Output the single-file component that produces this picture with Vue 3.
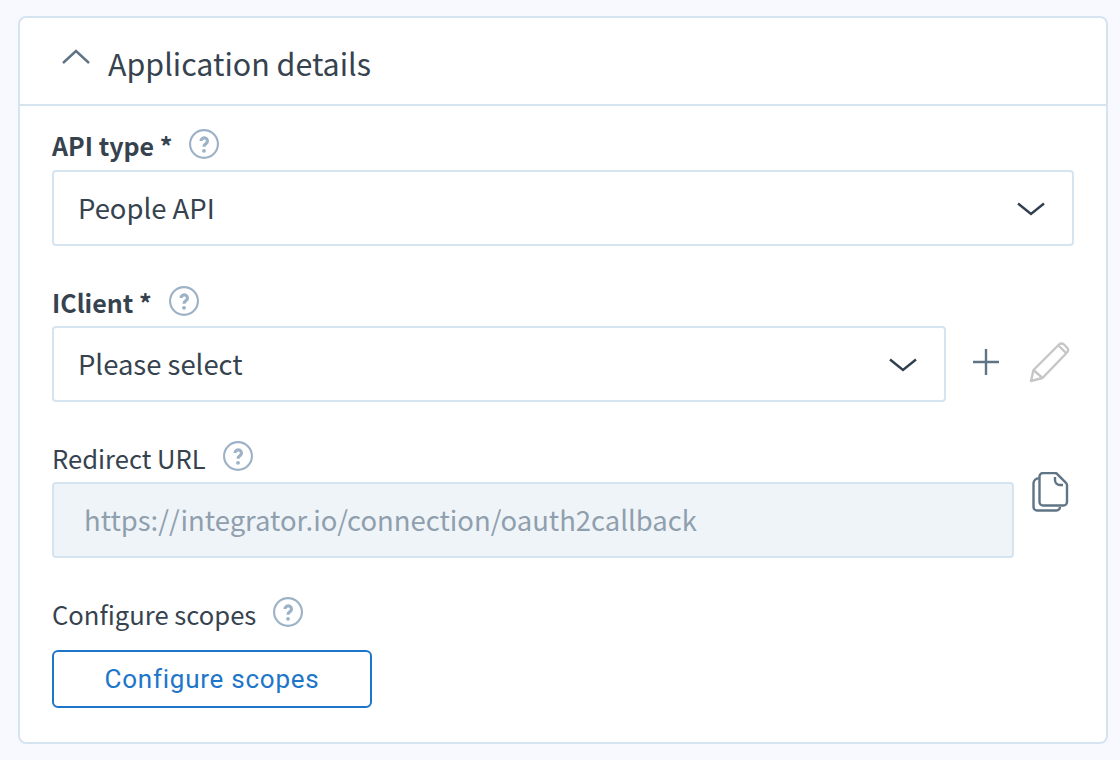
<script setup>
const qPath = 'M11.2 11.2a3 3 0 1 1 4.7 2.5c-1.2.8-1.9 1.4-1.9 2.8';
</script>

<template>
  <div class="page">
    <section class="card">
      <header class="head">
        <svg class="toggle" width="32" height="20" viewBox="0 0 32 20" fill="none">
          <path d="M3 16 16 4l13 12" stroke="#5f7485" stroke-width="2.4" />
        </svg>
        <h2 class="title">Application details</h2>
      </header>
      <div class="body">
        <div class="label-row first">
          <span class="label strong">API type *</span>
          <svg class="help" width="30" height="30" viewBox="0 0 28 28" fill="none">
            <circle cx="14" cy="14" r="13" stroke="#9db2c6" stroke-width="2" />
            <path :d="qPath" stroke="#9db2c6" stroke-width="3" />
            <circle cx="14" cy="20.4" r="1.8" fill="#9db2c6" />
          </svg>
        </div>
        <div class="select full">
          <span class="value">People API</span>
          <svg class="chev" width="30" height="16" viewBox="0 0 30 16" fill="none">
            <path d="M2 2.500 15 13 28 2.500" stroke="#2f3f4e" stroke-width="2.400" />
          </svg>
        </div>

        <div class="label-row second">
          <span class="label strong">IClient *</span>
          <svg class="help" width="30" height="30" viewBox="0 0 28 28" fill="none">
            <circle cx="14" cy="14" r="13" stroke="#9db2c6" stroke-width="2" />
            <path :d="qPath" stroke="#9db2c6" stroke-width="3" />
            <circle cx="14" cy="20.4" r="1.8" fill="#9db2c6" />
          </svg>
        </div>
        <div class="field-row">
          <div class="select grow">
            <span class="value">Please select</span>
            <svg class="chev" width="30" height="16" viewBox="0 0 30 16" fill="none">
              <path d="M2 2.500 15 13 28 2.500" stroke="#2f3f4e" stroke-width="2.400" />
            </svg>
          </div>
          <div class="actions">
            <svg width="28" height="28" viewBox="0 0 28 28" fill="none">
              <path d="M14 1v26M1 14h26" stroke="#5f7485" stroke-width="2.400" />
            </svg>
            <svg width="42" height="42" viewBox="0 0 42 42" fill="none" stroke="#c6c6c6" stroke-width="2.400" stroke-linejoin="round">
              <path d="M2 40 4.500 29 30 3.500a3.500 3.500 0 0 1 5 0l3 3a3.500 3.500 0 0 1 0 5L13.500 37Z" />
              <path d="M4.500 29 13.500 37M30 5l7 7" />
            </svg>
          </div>
        </div>

        <div class="label-row">
          <span class="label">Redirect URL</span>
          <svg class="help" width="30" height="30" viewBox="0 0 28 28" fill="none">
            <circle cx="14" cy="14" r="13" stroke="#9db2c6" stroke-width="2" />
            <path :d="qPath" stroke="#9db2c6" stroke-width="3" />
            <circle cx="14" cy="20.4" r="1.8" fill="#9db2c6" />
          </svg>
        </div>
        <div class="field-row url-row">
          <div class="select disabled"><span class="value">https://integrator.io/connection/oauth2callback</span></div>
          <svg class="copy" width="38" height="42" viewBox="0 0 38 42" fill="none" stroke="#5f7485" stroke-width="2.400" stroke-linejoin="round">
            <path d="M7.500 6.500A5 5 0 0 0 1.500 11v24A3.500 3.500 0 0 0 5 38.500h19.500a3.500 3.500 0 0 0 3.500-3.500" />
            <path d="M11 1h12a3 3 0 0 1 2 .8l9 9a3 3 0 0 1 1 2.200V30a3.500 3.500 0 0 1-3.500 3.500H11A3.500 3.500 0 0 1 7.500 30V4.500A3.500 3.500 0 0 1 11 1Z" />
            <path d="M23 5v3a5 5 0 0 0 5 5h3" />
          </svg>
        </div>

        <div class="label-row">
          <span class="label">Configure scopes</span>
          <svg class="help" width="30" height="30" viewBox="0 0 28 28" fill="none">
            <circle cx="14" cy="14" r="13" stroke="#9db2c6" stroke-width="2" />
            <path :d="qPath" stroke="#9db2c6" stroke-width="3" />
            <circle cx="14" cy="20.4" r="1.8" fill="#9db2c6" />
          </svg>
        </div>
        <button class="btn" type="button">Configure scopes</button>
      </div>
    </section>
  </div>
</template>

<style>
html, body { margin: 0; background: #f8f9ff; }
</style>

<style scoped>
.page {
  width: 1120px;
  height: 760px;
  box-sizing: border-box;
  padding: 16px 12px 16px 18px;
  background: #f8f9ff;
  font-family: "Noto Sans CJK SC", "Source Sans Pro", "Noto Sans", sans-serif;
  color: #36434f;
  overflow: hidden;
}
.card {
  height: 728px;
  box-sizing: border-box;
  background: #fff;
  border: 2px solid #d6e4f0;
  border-radius: 8px;
}
.head {
  height: 88px;
  box-sizing: border-box;
  border-bottom: 2px solid #d6e4f0;
  display: flex;
  align-items: center;
  gap: 16px;
  padding-left: 40px;
}
.toggle { margin-top: -8px; }
.title {
  margin: 4px 0 0;
  font-size: 30.4px;
  line-height: 44px;
  font-weight: 400;
  color: #36434f;
}
.body { padding: 0 32px; }
.label-row {
  display: flex;
  align-items: center;
  gap: 17px;
  height: 30px;
  margin-top: 39px;
  margin-bottom: 11px;
}
.label-row.first { margin-top: 23px; }
.label-row.second { margin-top: 40px; margin-bottom: 10px; }
.label { font-size: 25.6px; line-height: 30px; padding-top: 4px; }
.strong { font-weight: 700; font-size: 25px; padding-top: 2px; }
.help { flex: none; }
.select {
  height: 76px;
  box-sizing: border-box;
  border: 2px solid #d6e4f0;
  border-radius: 4px;
  padding: 0 26px 0 24px;
  display: flex;
  align-items: center;
  justify-content: space-between;
  font-size: 27.45px;
}
.value { padding-bottom: 2px; }
.chev { margin-top: 2px; }
.full { width: 1022px; }
.grow { width: 894px; flex: none; }
.field-row { display: flex; align-items: flex-start; }
.actions {
  display: flex;
  align-items: center;
  gap: 29px;
  margin-left: 26px;
  height: 72px;
}
.disabled {
  width: 962px;
  flex: none;
  padding-left: 30px;
  background: #eff4f8;
  color: #8f9fae;
}
.copy { margin: -10px 0 0 18px; }
.btn {
  display: block;
  width: 320px;
  height: 58px;
  margin-top: 23px;
  box-sizing: border-box;
  background: #fff;
  border: 2px solid #1d76c9;
  border-radius: 6px;
  color: #1d76c9;
  font-family: Roboto, sans-serif;
  font-size: 26px;
  letter-spacing: 0.75px;
}
</style>
